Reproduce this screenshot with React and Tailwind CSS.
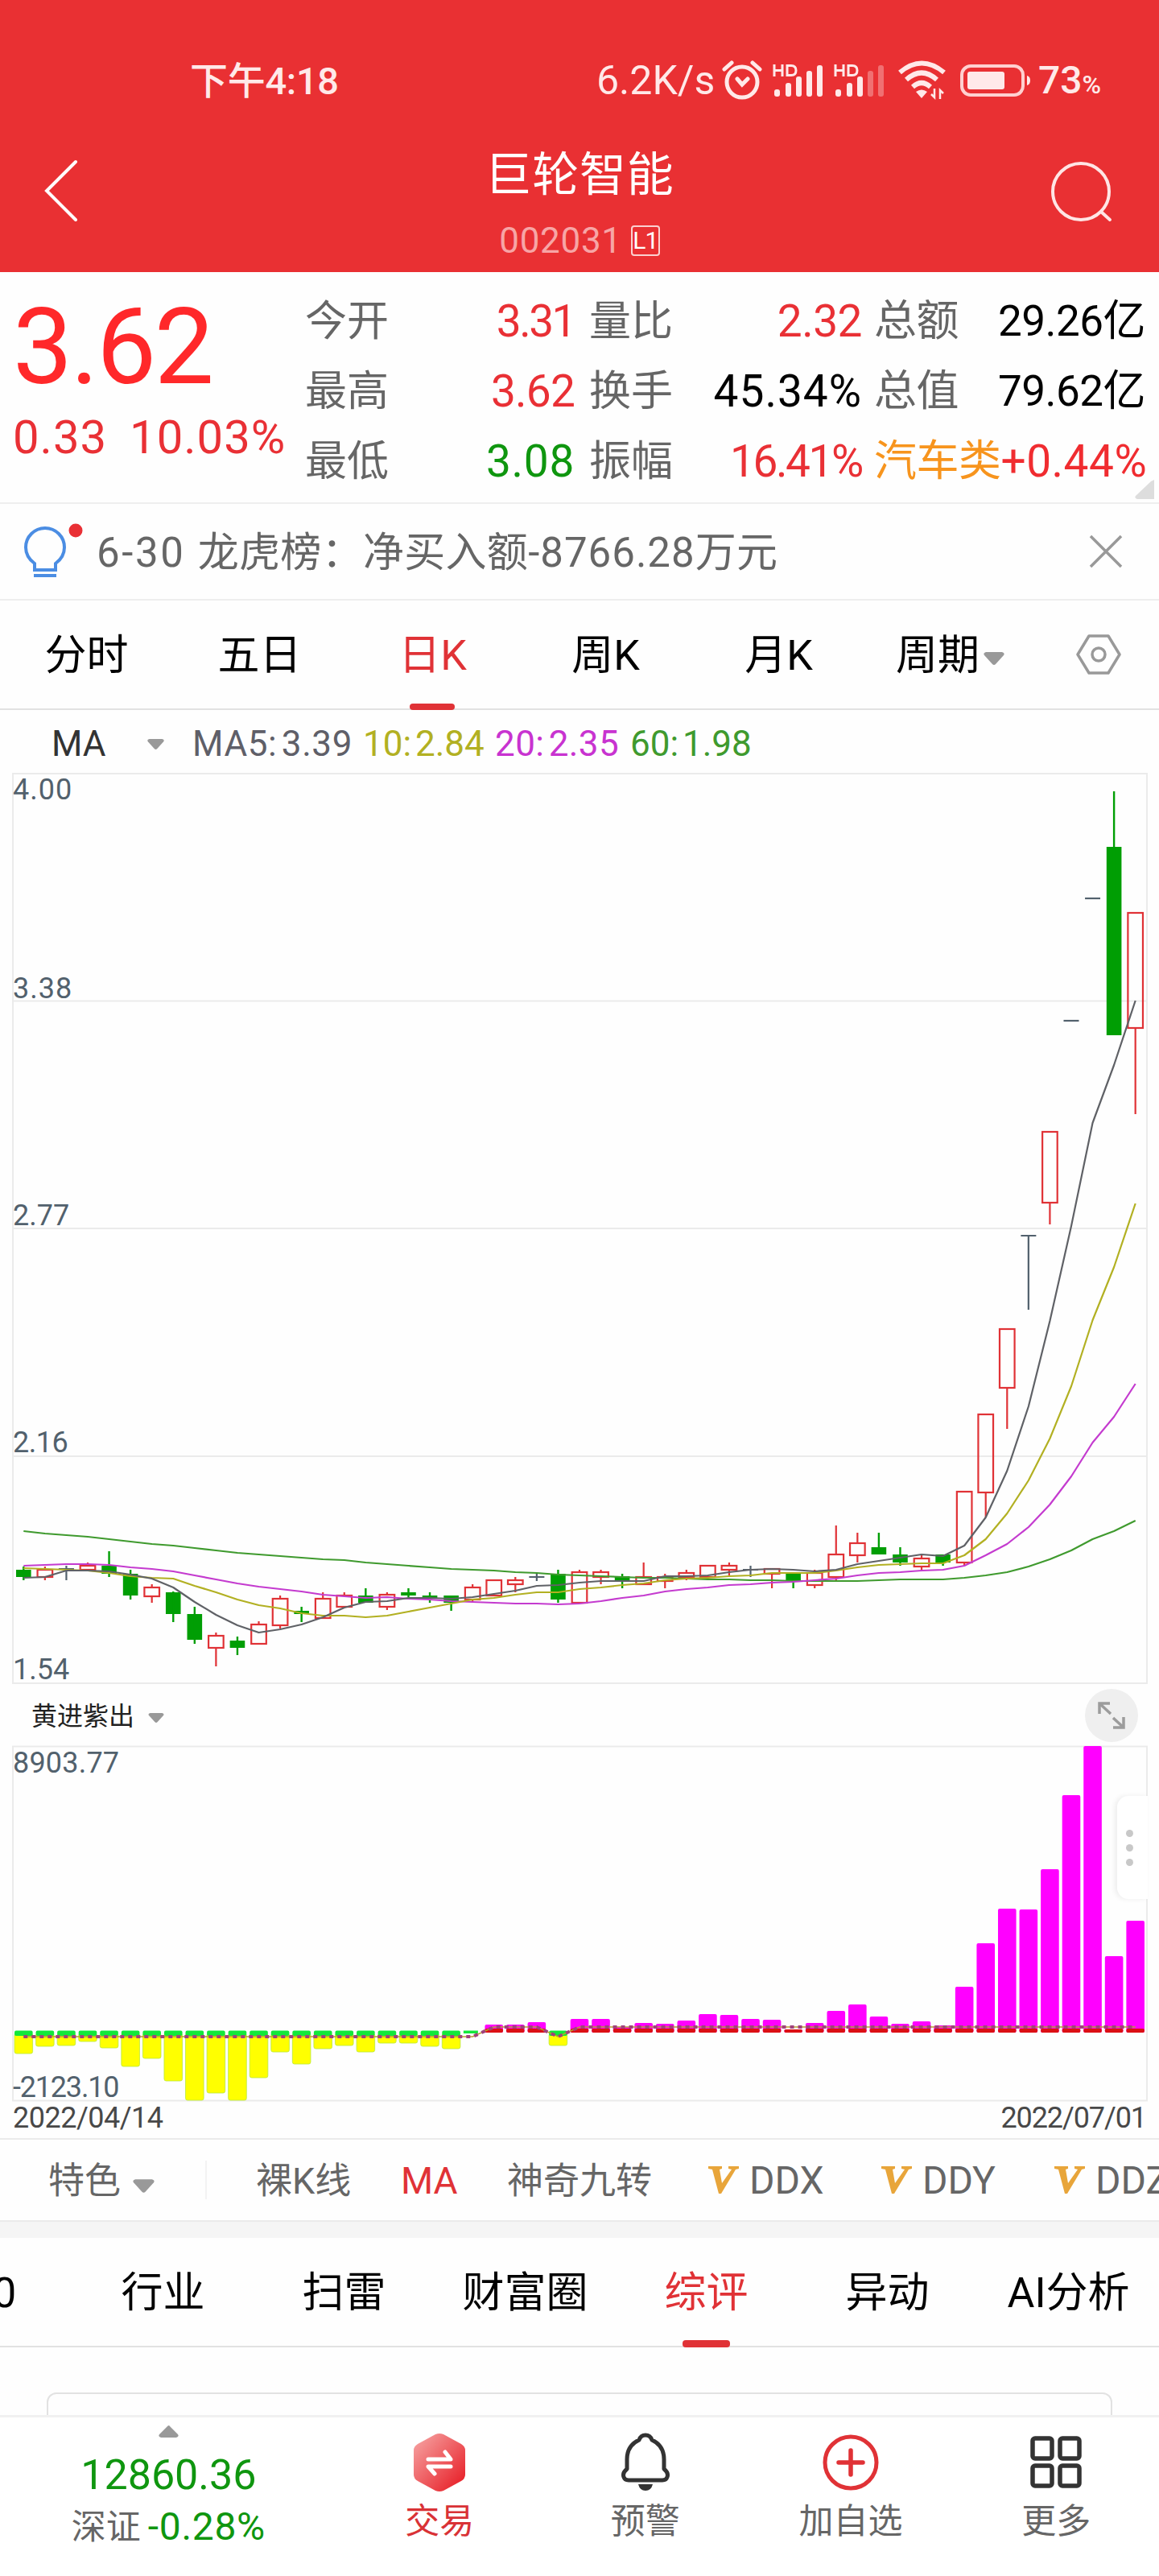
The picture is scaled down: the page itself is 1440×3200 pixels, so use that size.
const RED = '#e03236';
const GREEN = '#009e04';
const GREY = '#52616d';

const STEP = 26.565;
const cx = i => 29.3 + i * STEP;

// [kind, bodyTop, bodyBottom, high, low]   r = rise, g = fall, d = flat
const CANDLES = [
  ['g', 1950, 1959, 1946, 1963], ['r', 1950, 1959, 1946, 1963], ['d', 1949, 1949, 1945, 1963],
  ['r', 1945, 1950, 1941, 1950], ['g', 1945, 1955, 1927, 1959], ['g', 1955, 1982, 1950, 1987],
  ['r', 1972, 1983, 1968, 1991], ['g', 1978, 2005, 1977, 2015], ['g', 2005, 2037, 1996, 2042],
  ['r', 2032, 2047, 2028, 2070], ['g', 2038, 2047, 2033, 2056], ['r', 2018, 2042, 2014, 2042],
  ['r', 1986, 2019, 1982, 2023], ['g', 2001, 2005, 1996, 2015], ['r', 1986, 2010, 1978, 2010],
  ['r', 1982, 1996, 1978, 1996], ['g', 1982, 1991, 1973, 1991], ['r', 1981, 1996, 1978, 2000],
  ['g', 1978, 1982, 1973, 1984], ['g', 1982, 1986, 1978, 1991], ['g', 1982, 1991, 1982, 2001],
  ['r', 1972, 1987, 1968, 1991], ['r', 1963, 1982, 1963, 1982], ['r', 1963, 1968, 1959, 1978],
  ['d', 1959, 1959, 1955, 1964], ['g', 1955, 1987, 1950, 1991], ['r', 1953, 1991, 1950, 1991],
  ['r', 1953, 1959, 1950, 1968], ['g', 1958, 1963, 1955, 1973], ['r', 1959, 1968, 1941, 1968],
  ['r', 1959, 1964, 1955, 1973], ['r', 1954, 1959, 1950, 1963], ['r', 1945, 1959, 1945, 1963],
  ['r', 1945, 1950, 1941, 1957], ['d', 1950, 1950, 1945, 1959], ['r', 1949, 1955, 1949, 1973],
  ['g', 1955, 1963, 1955, 1973], ['r', 1954, 1969, 1950, 1973], ['r', 1931, 1959, 1895, 1963],
  ['r', 1917, 1932, 1904, 1941], ['g', 1922, 1931, 1904, 1931], ['g', 1931, 1941, 1922, 1945],
  ['r', 1936, 1946, 1932, 1950], ['g', 1931, 1941, 1931, 1945], ['r', 1853, 1941, 1853, 1945],
  ['r', 1757, 1854, 1757, 1885], ['r', 1651, 1724, 1651, 1775], ['d', 1535, 1535, 1535, 1627],
  ['r', 1406, 1494, 1406, 1521], ['d', 1268, 1268, 1268, 1268], ['d', 1116, 1116, 1116, 1116],
  ['g', 1052, 1286, 983, 1286], ['r', 1134, 1277, 1134, 1384],
];

const MA5 = [1960, 1959, 1951, 1951, 1952, 1956, 1961, 1972, 1990, 2006, 2019, 2028, 2024, 2018, 2009, 1997, 1990, 1989, 1985, 1985, 1986, 1984, 1980, 1976, 1970, 1969, 1966, 1964, 1964, 1964, 1958, 1958, 1957, 1953, 1950, 1949, 1950, 1952, 1950, 1943, 1939, 1935, 1931, 1933, 1920, 1885, 1827, 1747, 1641, 1523, 1395, 1323, 1243];
const MA10 = [1948, 1949, 1950, 1951, 1954, 1958, 1960, 1961, 1970, 1978, 1987, 1994, 1998, 2004, 2007, 2007, 2009, 2007, 2002, 1997, 1992, 1987, 1985, 1981, 1978, 1978, 1974, 1972, 1969, 1967, 1963, 1961, 1960, 1958, 1957, 1954, 1954, 1954, 1951, 1947, 1944, 1943, 1942, 1942, 1932, 1912, 1880, 1839, 1787, 1722, 1640, 1574, 1495];
const MA20 = [1945, 1944, 1943, 1943, 1944, 1947, 1949, 1952, 1957, 1962, 1967, 1971, 1974, 1977, 1981, 1983, 1985, 1984, 1986, 1987, 1989, 1990, 1991, 1992, 1992, 1993, 1992, 1989, 1985, 1982, 1977, 1974, 1972, 1969, 1968, 1966, 1965, 1963, 1961, 1957, 1954, 1953, 1951, 1950, 1945, 1932, 1918, 1897, 1869, 1834, 1792, 1760, 1719];
const MA60 = [1902, 1905, 1907, 1909, 1912, 1915, 1918, 1920, 1923, 1926, 1929, 1931, 1933, 1935, 1937, 1938, 1941, 1943, 1945, 1947, 1949, 1950, 1951, 1953, 1954, 1956, 1957, 1958, 1959, 1960, 1960, 1961, 1962, 1962, 1963, 1963, 1964, 1964, 1964, 1964, 1963, 1962, 1962, 1962, 1960, 1957, 1953, 1946, 1937, 1926, 1912, 1902, 1889];

const FLOW = [2551, 2542, 2541, 2536, 2544, 2567, 2557, 2585, 2609, 2600, 2609, 2581, 2549, 2564, 2545, 2541, 2549, 2538, 2538, 2542, 2545, 2526, 2515, 2515, 2512, 2541, 2508, 2508, 2518, 2513, 2514, 2510, 2502, 2503, 2508, 2509, 2521, 2513, 2498, 2490, 2505, 2514, 2511, 2516, 2468, 2414, 2371, 2372, 2322, 2230, 2169, 2430, 2386];

const line = ys => ys.map((y, i) => `${cx(i).toFixed(1)},${y}`).join(' ');
const flowLine = line(FLOW.map(v => (v > 2525 ? 2530 : 2518)));

function Caret({ className }) {
  return (
    <svg className={className} viewBox="0 0 26 16">
      <path d="M3 0h20q4 1 2 4L15 15q-2 2-4 0L1 4q-2-3 2-4z" fill="#999" />
    </svg>
  );
}

function Signal({ weak }) {
  return (
    <svg className="w-[64px] h-[46px]" viewBox="0 0 64 46" fill="#ffe9e9">
      <g fill="none" stroke="#ffe9e9" strokeWidth="3">
        <path d="M2 3v15M12 3v15M2 10.500h10M18 3v15M18 4.500h5q6 0 6 6t-6 6h-5" />
      </g>
      <rect x="2" y="34" width="7" height="9" rx="3" />
      <rect x="16" y="26" width="7" height="17" rx="3" />
      <rect x="29" y="18" width="7" height="25" rx="3" />
      <rect x="42" y="11" width="7" height="32" rx="3" opacity={weak ? 0.35 : 1} />
      <rect x="55" y="4" width="7" height="39" rx="3" opacity={weak ? 0.35 : 1} />
    </svg>
  );
}

function StatusBar() {
  return (
    <div className="h-[140px] pt-[60px] flex items-center text-[#ffe9e9] leading-none">
      <span className="ml-[236px] w-[505px] text-[47px] font-medium tracking-[-0.3px]">下午4:18</span>
      <span className="w-[156px] text-[50px] whitespace-nowrap">6.2K/s</span>
      <svg className="w-[50px] h-[50px]" viewBox="0 0 50 50" fill="none" stroke="#ffe9e9" strokeWidth="5" strokeLinecap="round">
        <circle cx="25" cy="27" r="19" />
        <path d="M3 11l9-8M47 11l-9-8M19 23l6 7 7-7" />
      </svg>
      <div className="ml-[13px] flex gap-[12px]">
        <Signal />
        <Signal weak />
      </div>
      <svg className="ml-[16px] w-[60px] h-[50px]" viewBox="0 0 60 50" fill="none" stroke="#ffe9e9" strokeWidth="6">
        <path d="M2 15Q29-8 57 15M10 24q19-17 38 0M18 33q11-10 22 0" />
        <path d="M22 39q7-5 14 0l-7 8z" fill="#ffe9e9" stroke="none" />
        <path d="M45 35v11l-4-4M52 48V37l4 4" strokeWidth="2.500" />
      </svg>
      <svg className="ml-[17px] w-[88px] h-[40px]" viewBox="0 0 88 40">
        <rect x="2" y="2" width="76" height="36" rx="11" fill="none" stroke="#ffd0d0" strokeWidth="4" />
        <rect x="9" y="9" width="46" height="22" rx="3" fill="#ffe9e9" />
        <path d="M83 14q4 1 4 6t-4 6z" fill="#ffe9e9" />
      </svg>
      <div className="ml-[9px] flex items-baseline font-medium">
        <span className="text-[48px]">73</span>
        <span className="text-[32px]">%</span>
      </div>
    </div>
  );
}

function TitleBar() {
  return (
    <div className="h-[198px] px-[54px] flex items-start justify-between">
      <svg className="mt-[58px] w-[83px] h-[80px]" viewBox="0 0 83 80" fill="none" stroke="#fff" strokeWidth="4" strokeLinecap="round">
        <path d="M40 3L4 39l36 36" />
      </svg>
      <div className="flex flex-col items-center leading-none text-white">
        <h1 className="mt-[48px] text-[58px] tracking-[0.7px]">巨轮智能</h1>
        <div className="mt-[31px] flex items-center">
          <span className="text-[44px] tracking-[0.7px] text-[#f7a5a6]">002031</span>
          <span className="ml-[11px] w-[36px] h-[38px] border-2 border-[#fbd0d0] rounded-[4px] flex items-center justify-center text-[30px] tracking-[-1px]">L1</span>
        </div>
      </div>
      <svg className="mt-[58px] w-[83px] h-[80px]" viewBox="0 0 83 80" fill="none" stroke="#ffe5e5" strokeWidth="4" strokeLinecap="round">
        <circle cx="40" cy="40" r="35" />
        <path d="M65 65l11 10" />
      </svg>
    </div>
  );
}

const QUOTES = [
  [
    ['今开', '3.31', 'text-[#e93035] tracking-[-2.5px]'],
    ['最高', '3.62', 'text-[#e93035] tracking-[-0.8px]'],
    ['最低', '3.08', 'text-[#0f960f] tracking-[0.7px]'],
  ],
  [
    ['量比', '2.32', 'text-[#e93035] tracking-[-0.5px]'],
    ['换手', '45.34%', 'text-black tracking-[1px]'],
    ['振幅', '16.41%', 'text-[#e93035] tracking-[-2.4px]'],
  ],
];

function Quote() {
  return (
    <section className="relative h-[288px] flex border-b-2 border-[#eeeeee] leading-none whitespace-nowrap">
      <div className="w-[379px] pl-[16px]">
        <div className="mt-[27px] text-[132px] tracking-[-2.5px] text-[#ff282a]">3.62</div>
        <div className="mt-[17px] flex gap-[28px] text-[58px] tracking-[1px] text-[#e93035]">
          <span>0.33</span>
          <span>10.03%</span>
        </div>
      </div>
      {QUOTES.map((rows, n) => (
        <div key={n} className={n ? 'ml-[18px] w-[339px] pt-[18px]' : 'w-[335px] pt-[18px]'}>
          {rows.map(([label, value, color]) => (
            <div key={label} className="h-[87px] flex items-center justify-between">
              <span className="text-[52px] text-[#666666]">{label}</span>
              <span className={`text-[55px] ${color}`}>{value}</span>
            </div>
          ))}
        </div>
      ))}
      <div className="ml-[15px] w-[338px] pt-[18px] text-[53px] tracking-[-0.5px]">
        <div className="h-[87px] pr-[1px] flex items-center justify-between">
          <span className="text-[#666666]">总额</span>
          <span>29.26亿</span>
        </div>
        <div className="h-[87px] pr-[1px] flex items-center justify-between">
          <span className="text-[#666666]">总值</span>
          <span>79.62亿</span>
        </div>
        <div className="h-[87px] flex items-center">
          <span className="text-[#f7941d]">汽车类</span>
          <span className="text-[55px] tracking-[0.5px] text-[#f02c30]">+0.44%</span>
        </div>
      </div>
      <svg className="absolute left-[1410px] top-[258px] w-[24px] h-[24px]" viewBox="0 0 24 24">
        <path d="M24 0v24H3q-4-1-2-4L20 2z" fill="#dddddd" />
      </svg>
    </section>
  );
}

function News() {
  return (
    <div className="h-[120px] flex items-center border-b-2 border-[#eeeeee]">
      <svg className="ml-[28px] w-[78px] h-[72px]" viewBox="0 0 78 72" fill="none" stroke="#4b8de3" strokeWidth="4">
        <path d="M15 59v-8Q4 43 4 31a24 24 0 0148 0q0 12-11 20v8z" />
        <path d="M14 66h28" />
        <circle cx="66" cy="10" r="8.500" fill="#e93035" stroke="none" />
      </svg>
      <span className="ml-[14px] mt-[3px] text-[51px] tracking-[0.3px] leading-none text-[#666666] whitespace-nowrap">
        <span className="tracking-[2.6px]">6-30 </span>龙虎榜：净买入额<span className="tracking-[1px]">-8766.28</span>万元
      </span>
      <svg className="ml-auto mr-[45px] w-[42px] h-[42px]" viewBox="0 0 42 42" stroke="#999" strokeWidth="3.500">
        <path d="M2 2l38 38M40 2L2 40" />
      </svg>
    </div>
  );
}

function PeriodTabs() {
  return (
    <nav className="h-[136px] flex border-b-2 border-[#e2e2e2] text-[52px] leading-none">
      {['分时', '五日', '日K', '周K', '月K'].map(t => (
        <div key={t} className={`relative w-[215px] pt-[4px] flex items-center justify-center ${t === '日K' ? 'text-[#e03236]' : 'text-black'}`}>
          {t}
          {t === '日K' && <i className="absolute bottom-[-2px] left-[79px] w-[56px] h-[8px] rounded-[4px] bg-[#e03236]" />}
        </div>
      ))}
      <div className="w-[211px] pt-[4px] flex items-center justify-center gap-[5px]">
        周期
        <Caret className="mt-[6px] w-[26px] h-[16px]" />
      </div>
      <div className="flex-1 pl-[4px] flex items-center justify-center">
        <svg className="w-[56px] h-[50px]" viewBox="0 0 56 50" fill="none" stroke="#999" strokeWidth="3.500" strokeLinejoin="round">
          <path d="M16 2h24l14 23-14 23H16L2 25z" />
          <circle cx="28" cy="25" r="8" />
        </svg>
      </div>
    </nav>
  );
}

function MaRow() {
  return (
    <div className="h-[78px] pt-[6px] flex items-center text-[44px] leading-none whitespace-nowrap [word-spacing:-6px]">
      <span className="ml-[64px] w-[119px] text-[#333333]">MA</span>
      <Caret className="w-[21px] h-[13px]" />
      <span className="ml-[35px] w-[212px] tracking-[0.6px] text-[#5f5f68]">MA5: 3.39</span>
      <span className="w-[164px] text-[#b2b022]">10: 2.84</span>
      <span className="w-[168px] tracking-[0.4px] text-[#c833d0]">20: 2.35</span>
      <span className="text-[#3f9a2e]">60: 1.98</span>
    </div>
  );
}

function Candle({ i, d: [kind, top, bottom, high, low] }) {
  const x = cx(i);
  if (kind === 'd') {
    return <path d={`M${x - 9.500} ${top}h19M${x} ${high}V${low}`} stroke={GREY} strokeWidth="2.200" />;
  }
  if (kind === 'g') {
    return (
      <g fill={GREEN}>
        <rect x={x - 9.300} y={top} width="18.600" height={bottom - top} />
        <rect x={x - 1.200} y={high} width="2.400" height={low - high} />
      </g>
    );
  }
  return (
    <g stroke={RED} strokeWidth="2.200" fill="none">
      <rect x={x - 9.300} y={top} width="18.600" height={bottom - top} />
      <path d={`M${x} ${high}V${top}M${x} ${bottom}V${low}`} />
    </g>
  );
}

function PriceChart() {
  return (
    <svg className="block w-[1440px] h-[1133px] overflow-visible" viewBox="0 960 1440 1133" fontSize="36" fill={GREY}>
      <g stroke="#ebebeb" strokeWidth="2" fill="none">
        <rect x="16" y="961" width="1409" height="1130" />
        <path d="M16 1243.500h1409M16 1526h1409M16 1809h1409" />
      </g>
      {CANDLES.map((d, i) => <Candle key={i} i={i} d={d} />)}
      <g fill="none" strokeWidth="2.200" strokeLinejoin="round">
        <polyline points={line(MA60)} stroke="#3f9a2e" />
        <polyline points={line(MA20)} stroke="#c43bcf" />
        <polyline points={line(MA10)} stroke="#b2b022" />
        <polyline points={line(MA5)} stroke="#5f6166" />
      </g>
      <g letterSpacing="1">
        <text x="16" y="993">4.00</text>
        <text x="16" y="1240">3.38</text>
        <text x="16" y="1522" letterSpacing="0">2.77</text>
        <text x="16" y="1804" letterSpacing="-0.5">2.16</text>
        <text x="16" y="2086" letterSpacing="0">1.54</text>
      </g>
    </svg>
  );
}

function FlowBar({ i, v }) {
  const x = cx(i) - 11.300;
  if (i === 21) return <rect x={x} y="2522.500" width="18" height="3.500" fill="#12e83a" />;
  if (v > 2526) {
    return (
      <g>
        <rect x={x} y="2526" width="22.600" height={v - 2526} rx="2.500" fill="#ffff00" stroke="#b9e93a" strokeWidth="0.800" />
        <rect x={x} y="2522.500" width="22.600" height="6.500" rx="2" fill="#12e83a" />
      </g>
    );
  }
  return (
    <g>
      <rect x={x} y={v} width="22.600" height={2525 - v} rx="2" fill="#ff00ff" />
      <rect x={x} y={Math.max(v, 2520)} width="22.600" height={2525 - Math.max(v, 2520)} rx="2" fill="#dc0f14" />
    </g>
  );
}

function FlowChart() {
  return (
    <section className="relative">
      <div className="h-[75px] flex items-center text-[32px] text-[#222222] leading-none">
        <span className="ml-[39px] mt-[2px] w-[145px]">黄进紫出</span>
        <Caret className="mt-[7px] w-[20px] h-[12px]" />
        <div className="ml-auto mr-[26px] w-[66px] h-[66px] rounded-full bg-[#efefef] flex items-center justify-center">
          <svg className="w-[36px] h-[36px]" viewBox="0 0 36 36" fill="none" stroke="#9c9c9c" strokeWidth="3.500">
            <path d="M3 16V3h13M3 3l14 13M33 20v13H20M33 33L20 21" />
          </svg>
        </div>
      </div>
      <svg className="block w-[1440px] h-[488px] overflow-visible" viewBox="0 2168 1440 488" fontSize="36" fill={GREY}>
        <rect x="16" y="2169.500" width="1409" height="440" fill="none" stroke="#ebebeb" strokeWidth="2" />
        {FLOW.map((v, i) => <FlowBar key={i} i={i} v={v} />)}
        <g fill="none">
          <polyline points={flowLine} stroke="#b9a02c" strokeWidth="1.500" />
          <polyline points={flowLine} stroke="#a0417c" strokeWidth="4" strokeDasharray="5 5" />
        </g>
        <text x="16" y="2202" letterSpacing="0.2">8903.77</text>
        <text x="16" y="2605" letterSpacing="-1.2">-2123.10</text>
        <text x="16" y="2643" fill="#484848" letterSpacing="-0.5">2022/04/14</text>
        <text x="1424" y="2643" fill="#484848" textAnchor="end" letterSpacing="-1.1">2022/07/01</text>
      </svg>
      {/* drawer handle over the chart edge */}
      <div className="absolute left-[1388px] top-[138px] w-[38px] h-[128px] rounded-l-[14px] bg-white shadow-[-3px_0_6px_rgba(0,0,0,0.07)] flex flex-col items-center justify-center gap-[9px] pr-[8px]">
        {[0, 1, 2].map(n => <i key={n} className="w-[9px] h-[9px] rounded-full bg-[#c8c8c8]" />)}
      </div>
    </section>
  );
}

function Vip() {
  return (
    <svg className="w-[38px] h-[36px] shrink-0" viewBox="0 0 38 36" fill="#e8a53a">
      <path d="M0 1h17v3l-3 1 3 17L29 5l-4-1V1h13v3l-4 1-18 30h-3L5 5 0 4z" />
    </svg>
  );
}

function IndicatorTabs() {
  return (
    <div className="h-[104px] border-y-2 border-[#ebebeb] flex items-center overflow-hidden text-[45px] leading-none text-[#666666] whitespace-nowrap">
      <span className="ml-[60px] mt-[2px] shrink-0">特色</span>
      <Caret className="ml-[15px] mt-[14px] w-[27px] h-[17px] shrink-0" />
      <i className="ml-[63px] w-[2px] h-[48px] shrink-0 bg-[#f3f3f3]" />
      <span className="ml-[61px] mt-[2px] w-[180px] shrink-0">裸K线</span>
      <span className="mt-[2px] w-[132px] shrink-0 text-[46px] text-[#e03236]">MA</span>
      <span className="mt-[2px] w-[250px] shrink-0">神奇九转</span>
      {['DDX', 'DDY', 'DDZ'].map(t => (
        <div key={t} className="w-[215px] shrink-0 flex items-center gap-[13px]">
          <Vip />
          <span className="mt-[2px] text-[48px]">{t}</span>
        </div>
      ))}
    </div>
  );
}

function InfoTabs() {
  return (
    <nav className="h-[136px] flex border-b-2 border-[#e2e2e2] text-[52px] leading-none">
      <div className="-ml-[9px] pt-[4px] w-[99px] flex items-center">0</div>
      {['行业', '扫雷', '财富圈', '综评', '异动', 'AI分析'].map(t => (
        <div key={t} className={`relative w-[225px] pt-[4px] flex items-center justify-center whitespace-nowrap ${t === '综评' ? 'text-[#e03236]' : 'text-black'}`}>
          {t}
          {t === '综评' && <i className="absolute bottom-[-2px] left-[83px] w-[59px] h-[9px] rounded-[4px] bg-[#e03236]" />}
        </div>
      ))}
    </nav>
  );
}

function NavItem({ label, color, children }) {
  return (
    <div className={`w-[255.500px] pt-[19px] flex flex-col items-center text-[43px] leading-none ${color}`}>
      <svg className="w-[72px] h-[74px] mb-[15px]" viewBox="0 0 72 74" fill="none">{children}</svg>
      {label}
    </div>
  );
}

function BottomNav() {
  return (
    <footer className="h-[200px] flex border-t-[3px] border-[#f1f1f1] bg-white leading-none">
      <div className="w-[419px] flex flex-col items-center">
        <svg className="mt-[10px] w-[25px] h-[15px]" viewBox="0 0 25 15">
          <path d="M3 15q-4-1-2-4L11 1q2-2 3 0l10 10q2 3-2 4z" fill="#999" />
        </svg>
        <span className="mt-[21px] text-[52px] text-[#0f960f]">12860.36</span>
        <div className="mt-[14px] flex items-center">
          <span className="text-[43px] text-[#666666]">深证</span>
          <span className="ml-[9px] text-[48px] tracking-[0.7px] text-[#0f960f]">-0.28%</span>
        </div>
      </div>
      <NavItem label="交易" color="text-[#d93236]">
        <defs>
          <linearGradient id="trade" x1="0" y1="0" x2="1" y2="1">
            <stop offset="0.1" stopColor="#f59a9a" />
            <stop offset="0.9" stopColor="#e8242c" />
          </linearGradient>
        </defs>
        <path d="M31 2q5-2 10 0l22 12q5 3 5 8v30q0 5-5 8L41 72q-5 2-10 0L9 60q-5-3-5-8V22q0-5 5-8z" fill="url(#trade)" />
        <path d="M22 33h28l-7-9M50 42H22l8 9" stroke="#fff" strokeWidth="5" strokeLinecap="round" strokeLinejoin="round" />
      </NavItem>
      <NavItem label="预警" color="text-[#666666]">
        <path d="M36 3q6 0 8 6 15 7 15 24v12q6 5 4 10-1 4-6 4H15q-5 0-6-4-2-5 4-10V33q0-17 15-24 2-6 8-6z" stroke="#333" strokeWidth="5" strokeLinejoin="round" />
        <path d="M27 64h18q-2 8-9 8t-9-8z" fill="#333" />
      </NavItem>
      <NavItem label="加自选" color="text-[#666666]">
        <circle cx="36" cy="37" r="32" stroke="#e03236" strokeWidth="5" />
        <path d="M36 22v30M21 37h30" stroke="#e03236" strokeWidth="5.500" strokeLinecap="round" />
      </NavItem>
      <NavItem label="更多" color="text-[#666666]">
        <g stroke="#333" strokeWidth="5.500">
          <rect x="7" y="7" width="24" height="25" rx="3" />
          <rect x="41" y="7" width="24" height="25" rx="3" />
          <rect x="7" y="41" width="24" height="25" rx="3" />
          <rect x="41" y="41" width="24" height="25" rx="3" />
        </g>
      </NavItem>
    </footer>
  );
}

export default function App() {
  return (
    <div className="w-[1440px] h-[3200px] overflow-hidden flex flex-col bg-[#fefefe] text-black font-[Roboto,'Noto_Sans_CJK_SC',sans-serif]">
      <header className="h-[338px] bg-[#e93033]">
        <StatusBar />
        <TitleBar />
      </header>
      <Quote />
      <News />
      <PeriodTabs />
      <MaRow />
      <PriceChart />
      <FlowChart />
      <IndicatorTabs />
      <div className="h-[20px] bg-[#f5f5f5]" />
      <InfoTabs />
      <div className="h-[84px] pt-[56px] px-[58px] overflow-hidden">
        <div className="h-[60px] border-2 border-[#e2e2e2] rounded-[12px]" />
      </div>
      <BottomNav />
    </div>
  );
}
